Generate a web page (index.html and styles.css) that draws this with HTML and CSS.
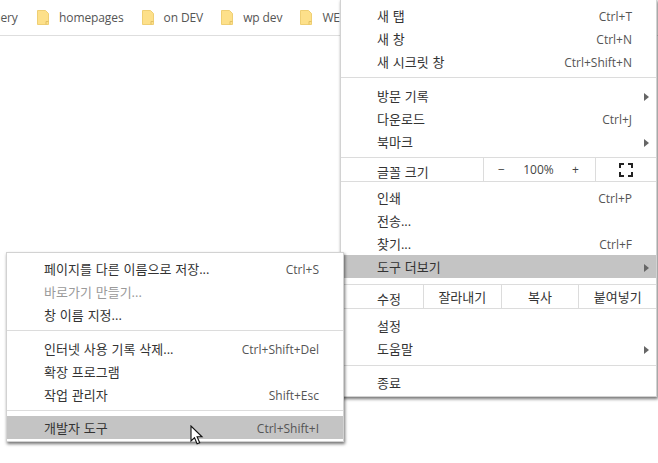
FILE: index.html
```html
<!DOCTYPE html>
<html lang="ko">

<head>
	<meta charset="UTF-8">
	<title>Chrome menu</title>
	<link rel="stylesheet" href="styles.css">
</head>

<body>
	<div class="bookmarks">
		<span class="bookmark-cut">jQuery</span>
		<div class="bookmark">
			<svg class="folder" width="12" height="15" viewBox="0 0 12 15"><path d="M.5.5h8l3 3v11H.5z" fill="#fde08a" stroke="#efcf74"/><path d="M9 14.5v-3h2.5" fill="none" stroke="#e2c064"/></svg>
			<span>homepages</span>
		</div>
		<div class="bookmark">
			<svg class="folder" width="12" height="15" viewBox="0 0 12 15"><path d="M.5.5h8l3 3v11H.5z" fill="#fde08a" stroke="#efcf74"/><path d="M9 14.5v-3h2.5" fill="none" stroke="#e2c064"/></svg>
			<span>on DEV</span>
		</div>
		<div class="bookmark">
			<svg class="folder" width="12" height="15" viewBox="0 0 12 15"><path d="M.5.5h8l3 3v11H.5z" fill="#fde08a" stroke="#efcf74"/><path d="M9 14.5v-3h2.5" fill="none" stroke="#e2c064"/></svg>
			<span>wp dev</span>
		</div>
		<div class="bookmark">
			<svg class="folder" width="12" height="15" viewBox="0 0 12 15"><path d="M.5.5h8l3 3v11H.5z" fill="#fde08a" stroke="#efcf74"/><path d="M9 14.5v-3h2.5" fill="none" stroke="#e2c064"/></svg>
			<span>WEB</span>
		</div>
	</div>

	<div class="menu main-menu">
		<div class="group first">
			<div class="row"><span class="label">새 탭</span><span class="key">Ctrl+T</span></div>
			<div class="row"><span class="label">새 창</span><span class="key">Ctrl+N</span></div>
			<div class="row"><span class="label">새 시크릿 창</span><span class="key">Ctrl+Shift+N</span></div>
		</div>
		<div class="sep"></div>
		<div class="group history">
			<div class="row"><span class="label">방문 기록</span><span class="arrow"></span></div>
			<div class="row"><span class="label">다운로드</span><span class="key">Ctrl+J</span></div>
			<div class="row"><span class="label">북마크</span><span class="arrow"></span></div>
		</div>
		<div class="sep"></div>
		<div class="cells zoom-row">
			<div class="cell-label label">글꼴 크기</div>
			<div class="zoom-controls"><span>−</span><span>100%</span><span>+</span></div>
			<div class="fullscreen">
				<svg width="14" height="14" viewBox="0 0 14 14"><path d="M1 5V1h4M9 1h4v4M13 9v4H9M5 13H1V9" fill="none" stroke="#222" stroke-width="2"/></svg>
			</div>
		</div>
		<div class="sep"></div>
		<div class="group print">
			<div class="row"><span class="label">인쇄</span><span class="key">Ctrl+P</span></div>
			<div class="row"><span class="label">전송...</span></div>
			<div class="row"><span class="label">찾기...</span><span class="key">Ctrl+F</span></div>
			<div class="row active"><span class="label">도구 더보기</span><span class="arrow"></span></div>
		</div>
		<div class="sep"></div>
		<div class="cells edit-row">
			<div class="cell-label label">수정</div>
			<div class="edit-btn label">잘라내기</div>
			<div class="edit-btn label">복사</div>
			<div class="edit-btn label">붙여넣기</div>
		</div>
		<div class="sep"></div>
		<div class="group settings">
			<div class="row"><span class="label">설정</span></div>
			<div class="row"><span class="label">도움말</span><span class="arrow"></span></div>
		</div>
		<div class="sep"></div>
		<div class="group quit">
			<div class="row"><span class="label">종료</span></div>
		</div>
	</div>

	<div class="menu sub-menu">
		<div class="group sub-first">
			<div class="row"><span class="label">페이지를 다른 이름으로 저장...</span><span class="key">Ctrl+S</span></div>
			<div class="row disabled"><span class="label">바로가기 만들기...</span></div>
			<div class="row"><span class="label">창 이름 지정...</span></div>
		</div>
		<div class="sep"></div>
		<div class="group sub-second">
			<div class="row"><span class="label">인터넷 사용 기록 삭제...</span><span class="key">Ctrl+Shift+Del</span></div>
			<div class="row"><span class="label">확장 프로그램</span></div>
			<div class="row"><span class="label">작업 관리자</span><span class="key">Shift+Esc</span></div>
		</div>
		<div class="sep"></div>
		<div class="group sub-third">
			<div class="row active"><span class="label">개발자 도구</span><span class="key">Ctrl+Shift+I</span></div>
		</div>
	</div>

	<svg class="cursor" width="14" height="20" viewBox="0 0 14 20"><path d="M1 1v15l3.5-3.2 2.6 6 2.6-1.1-2.6-5.9H12z" fill="#fff" stroke="#111" stroke-width="1.1"/></svg>
</body>

</html>
```

FILE: styles.css
```css
body
{
	margin: 0;
	height: 463px;
	overflow: hidden;
	background-color: #ffffff;
	color: #333333;
	font-family: "Open Sans", "Noto Sans CJK KR", sans-serif;
	font-size: 12px;
}

.bookmarks
{
	display: flex;
	align-items: center;
	height: 35px;
	border-bottom: 1px solid #dedede;
	overflow: hidden;
	font-size: 12px;
	letter-spacing: -0.1px;
	color: #555555;
}

.bookmark-cut
{
	margin-left: -19px;
	width: 56px;
	flex-shrink: 0;
}

.bookmark
{
	display: flex;
	align-items: center;
	flex-shrink: 0;
	margin-right: 18px;
}

.folder
{
	margin-right: 10px;
}

.menu
{
	position: absolute;
	box-sizing: border-box;
	background-color: #ffffff;
	border: 1px solid #d2d2d2;
	box-shadow: 1px 2px 3px rgba(0, 0, 0, 0.55);
}

.main-menu
{
	left: 340px;
	top: -1px;
	width: 317px;
	height: 398px;
}

.sub-menu
{
	left: 6px;
	top: 252px;
	width: 338px;
	height: 190px;
}

.row
{
	display: flex;
	align-items: center;
	justify-content: space-between;
	height: 23px;
	padding: 2px 24px 0 36px;
	box-sizing: border-box;
}

.sub-menu .row
{
	padding-left: 37px;
}

.label
{
	font-size: 13px;
	word-spacing: 0.5px;
}

.row .label
{
	margin-bottom: 2px;
}

.key
{
	color: #555555;
}

.active
{
	background-color: #c4c4c4;
}

.disabled
{
	color: #9a9a9a;
}

.arrow
{
	width: 0;
	height: 0;
	margin-right: -17px;
	border-left: 5px solid #666666;
	border-top: 4px solid transparent;
	border-bottom: 4px solid transparent;
}

.sep
{
	height: 1px;
	background-color: #dcdcdc;
}

.first { padding: 4px 0 4px; }
.history { padding: 6px 0 4px; }
.print { padding: 4px 0 6px; }
.settings { padding: 5px 0 5px; }
.quit { padding: 5px 0 0; }
.sub-first { padding: 4px 0 4px; }
.sub-second { padding: 6px 0 4px; }
.sub-third { padding: 5px 0 0; }

.cells
{
	display: flex;
	height: 23px;
}

.cell-label
{
	display: flex;
	align-items: center;
	padding: 3px 0 0 36px;
	box-sizing: border-box;
	flex-shrink: 0;
}

.zoom-row .cell-label
{
	width: 143px;
	border-right: 1px solid #dcdcdc;
}

.zoom-controls
{
	display: flex;
	align-items: center;
	justify-content: space-between;
	box-sizing: border-box;
	width: 112px;
	padding: 0 16px 0 14px;
	border-right: 1px solid #dcdcdc;
	color: #444444;
}

.fullscreen
{
	flex: 1;
	display: flex;
	align-items: center;
	justify-content: center;
	padding-right: 1px;
}

.edit-row .cell-label
{
	width: 82px;
}

.edit-btn
{
	display: flex;
	align-items: center;
	justify-content: center;
	width: 78px;
	box-sizing: border-box;
	border-left: 1px solid #dcdcdc;
}

.cursor
{
	position: absolute;
	left: 190px;
	top: 425px;
}
```
